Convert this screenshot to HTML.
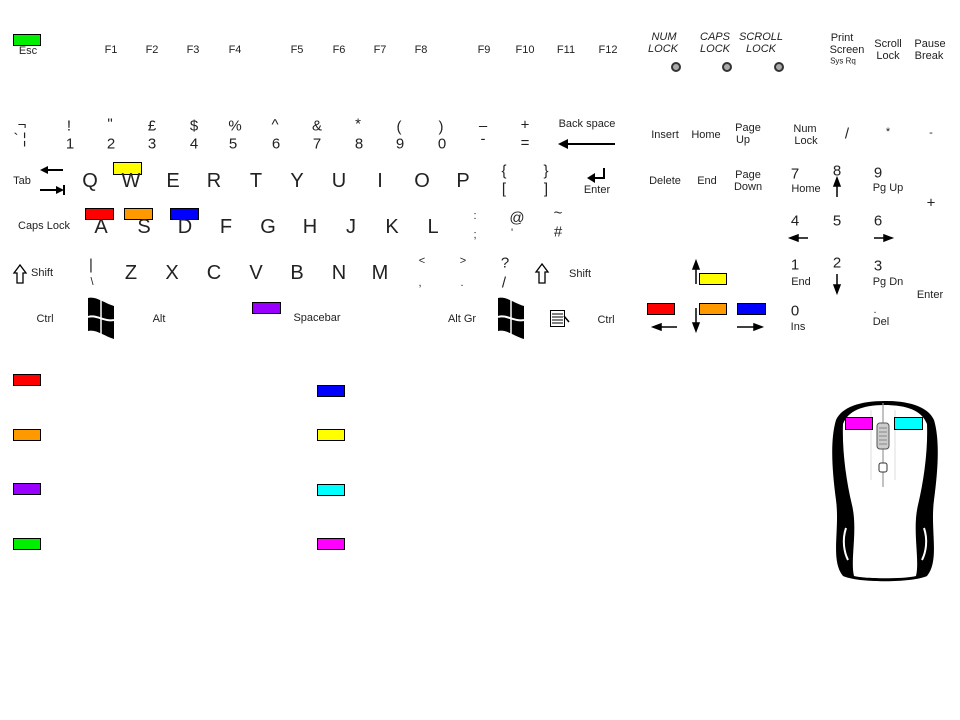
<!DOCTYPE html>
<html><head><meta charset="utf-8"><style>
html,body{margin:0;padding:0;background:#fff;width:960px;height:720px;overflow:hidden}
svg text{font-family:"Liberation Sans",sans-serif;fill:#222;text-anchor:middle;dominant-baseline:central}
.s{font-size:11px}.m{font-size:15px}.l{font-size:20px}.t{font-size:10px}
.i{font-style:italic;font-size:11px}
</style></head><body>
<svg width="960" height="720" viewBox="0 0 960 720" xmlns="http://www.w3.org/2000/svg">
<defs>
<g id="win">
<path d="M0,0 C8,-2 16,5 26,8 L26,41 C16,38 8,31 0,33 Z" fill="#000"/>
<path d="M0,19 C8,16 16,24 26,22" stroke="#fff" stroke-width="2" fill="none"/>
<path d="M13,2 L13,36" stroke="#fff" stroke-width="1.5"/>
</g>
</defs>
<g stroke="#000" stroke-width="1">
<rect x="13.5" y="34.5" width="27" height="11" fill="#00ee00"/>
<rect x="113.5" y="162.5" width="28" height="12" fill="#ffff00"/>
<rect x="85.5" y="208.5" width="28" height="11" fill="#ff0000"/>
<rect x="124.5" y="208.5" width="28" height="11" fill="#ff9900"/>
<rect x="170.5" y="208.5" width="28" height="11" fill="#0000ff"/>
<rect x="252.5" y="302.5" width="28" height="11" fill="#9900ff"/>
<rect x="699.5" y="273.5" width="27" height="11" fill="#ffff00"/>
<rect x="647.5" y="303.5" width="27" height="11" fill="#ff0000"/>
<rect x="699.5" y="303.5" width="27" height="11" fill="#ff9900"/>
<rect x="737.5" y="303.5" width="28" height="11" fill="#0000ff"/>
<rect x="13.5" y="374.5" width="27" height="11" fill="#ff0000"/>
<rect x="13.5" y="429.5" width="27" height="11" fill="#ff9900"/>
<rect x="13.5" y="483.5" width="27" height="11" fill="#9900ff"/>
<rect x="13.5" y="538.5" width="27" height="11" fill="#00ee00"/>
<rect x="317.5" y="385.5" width="27" height="11" fill="#0000ff"/>
<rect x="317.5" y="429.5" width="27" height="11" fill="#ffff00"/>
<rect x="317.5" y="484.5" width="27" height="11" fill="#00ffff"/>
<rect x="317.5" y="538.5" width="27" height="11" fill="#ff00ff"/>
</g>
<text class="s" x="28" y="51">Esc</text>
<text class="s" x="111" y="50">F1</text><text class="s" x="152" y="50">F2</text><text class="s" x="193" y="50">F3</text><text class="s" x="235" y="50">F4</text>
<text class="s" x="297" y="50">F5</text><text class="s" x="339" y="50">F6</text><text class="s" x="380" y="50">F7</text><text class="s" x="421" y="50">F8</text>
<text class="s" x="484" y="50">F9</text><text class="s" x="525" y="50">F10</text><text class="s" x="566" y="50">F11</text><text class="s" x="608" y="50">F12</text>
<text class="i" x="664" y="37">NUM</text><text class="i" x="663" y="49">LOCK</text>
<text class="i" x="715" y="37">CAPS</text><text class="i" x="715" y="49">LOCK</text>
<text class="i" x="761" y="37">SCROLL</text><text class="i" x="761" y="49">LOCK</text>
<g fill="#aaa" stroke="#333" stroke-width="2"><circle cx="676" cy="67" r="4"/><circle cx="727" cy="67" r="4"/><circle cx="779" cy="67" r="4"/></g>
<text class="s" x="842" y="38">Print</text><text class="s" x="847" y="50">Screen</text><text style="font-size:8px" x="843" y="61">Sys Rq</text>
<text class="s" x="888" y="44">Scroll</text><text class="s" x="888" y="56">Lock</text>
<text class="s" x="930" y="44">Pause</text><text class="s" x="929" y="56">Break</text>
<text class="m" x="22" y="125">¬</text><text class="m" x="20" y="139">` ¦</text>
<text class="m" x="69" y="126">!</text><text class="m" x="70" y="144">1</text>
<text class="m" x="110" y="124">"</text><text class="m" x="111" y="144">2</text>
<text class="m" x="152" y="126">£</text><text class="m" x="152" y="144">3</text>
<text class="m" x="194" y="126">$</text><text class="m" x="194" y="144">4</text>
<text class="m" x="235" y="126">%</text><text class="m" x="233" y="144">5</text>
<text class="m" x="275" y="125">^</text><text class="m" x="276" y="144">6</text>
<text class="m" x="317" y="126">&amp;</text><text class="m" x="317" y="144">7</text>
<text class="m" x="358" y="124">*</text><text class="m" x="359" y="144">8</text>
<text class="m" x="399" y="127">(</text><text class="m" x="400" y="144">9</text>
<text class="m" x="441" y="127">)</text><text class="m" x="442" y="144">0</text>
<text class="m" x="483" y="126">–</text><text class="m" x="483" y="139">-</text>
<text class="m" x="525" y="125">+</text><text class="m" x="525" y="143">=</text>
<text class="s" x="587" y="124">Back space</text>
<path d="M565,144 L615,144" stroke="#000" stroke-width="2"/><path d="M558,144 L568,139 L568,149Z" fill="#000"/>
<text class="s" x="22" y="181">Tab</text>
<path d="M46,170 L63,170" stroke="#000" stroke-width="2"/><path d="M40,170 L48,166 L48,174Z" fill="#000"/>
<path d="M40,190 L57,190" stroke="#000" stroke-width="2"/><path d="M64,190 L56,186 L56,194Z" fill="#000"/><path d="M64,185 L64,195" stroke="#000" stroke-width="2"/>
<text class="l" x="90" y="181">Q</text><text class="l" x="131" y="181">W</text><text class="l" x="173" y="181">E</text><text class="l" x="214" y="181">R</text><text class="l" x="256" y="181">T</text>
<text class="l" x="297" y="181">Y</text><text class="l" x="339" y="181">U</text><text class="l" x="380" y="181">I</text><text class="l" x="422" y="181">O</text><text class="l" x="463" y="181">P</text>
<text class="m" x="504" y="171">{</text><text class="m" x="504" y="189">[</text><text class="m" x="546" y="171">}</text><text class="m" x="546" y="189">]</text>
<path d="M604,168 L604,178 L593,178" stroke="#000" stroke-width="2" fill="none"/><path d="M587,178 L595,173 L595,183Z" fill="#000"/>
<text class="s" x="597" y="190">Enter</text>
<text class="s" x="44" y="226">Caps Lock</text>
<text class="l" x="101" y="227">A</text><text class="l" x="144" y="227">S</text><text class="l" x="185" y="227">D</text><text class="l" x="226" y="227">F</text><text class="l" x="268" y="227">G</text>
<text class="l" x="310" y="227">H</text><text class="l" x="351" y="227">J</text><text class="l" x="392" y="227">K</text><text class="l" x="433" y="227">L</text>
<text class="s" x="475" y="216">:</text><text class="s" x="475" y="235">;</text>
<text class="m" x="517" y="218">@</text><text class="s" x="512" y="233">'</text>
<text class="m" x="558" y="213">~</text><text class="m" x="558" y="232">#</text>
<path d="M20,265 L14,273 L17,273 L17,283 L23,283 L23,273 L26,273Z" fill="#fff" stroke="#000" stroke-width="1.3"/>
<text class="s" x="42" y="273">Shift</text>
<text class="m" x="91" y="265">|</text><text class="s" x="92" y="282">\</text>
<text class="l" x="131" y="273">Z</text><text class="l" x="172" y="273">X</text><text class="l" x="214" y="273">C</text><text class="l" x="256" y="273">V</text>
<text class="l" x="297" y="273">B</text><text class="l" x="339" y="273">N</text><text class="l" x="380" y="273">M</text>
<text class="s" x="422" y="261">&lt;</text><text class="s" x="420" y="283">,</text>
<text class="s" x="463" y="261">&gt;</text><text class="s" x="462" y="283">.</text>
<text class="m" x="505" y="263">?</text><text class="m" x="504" y="283">/</text>
<path d="M542,264 L536,272 L539,272 L539,283 L545,283 L545,272 L548,272Z" fill="#fff" stroke="#000" stroke-width="1.3"/>
<text class="s" x="580" y="274">Shift</text>
<text class="s" x="45" y="319">Ctrl</text>
<use href="#win" x="88" y="298"/>
<text class="s" x="159" y="319">Alt</text>
<text class="s" x="317" y="318">Spacebar</text>
<text class="s" x="462" y="319">Alt Gr</text>
<use href="#win" x="498" y="298"/>
<g stroke="#000" fill="#fff"><rect x="550.5" y="310.5" width="14" height="16"/><path d="M552,314h11M552,317h11M552,320h11M552,323h11"/></g>
<path d="M564,316 L569,322" stroke="#000" stroke-width="1.5"/>
<text class="s" x="606" y="320">Ctrl</text>
<text class="s" x="665" y="135">Insert</text><text class="s" x="706" y="135">Home</text><text class="s" x="748" y="128">Page</text><text class="s" x="743" y="140">Up</text>
<text class="s" x="665" y="181">Delete</text><text class="s" x="707" y="181">End</text><text class="s" x="748" y="175">Page</text><text class="s" x="748" y="187">Down</text>
<g stroke="#000" stroke-width="1.5" fill="#000">
<path d="M696,268 L696,284" fill="none"/><path d="M696,261 L693,269 L699,269Z"/>
<path d="M696,308 L696,324" fill="none"/><path d="M696,331 L693,323 L699,323Z"/>
<path d="M660,327 L677,327" fill="none"/><path d="M653,327 L661,324 L661,330Z"/>
<path d="M737,327 L755,327" fill="none"/><path d="M762,327 L754,324 L754,330Z"/>
</g>
<text class="s" x="805" y="129">Num</text><text class="s" x="806" y="141">Lock</text>
<text class="m" x="847" y="134">/</text><text class="s" x="888" y="132">*</text><text class="s" x="931" y="133">-</text>
<text class="m" x="795" y="174">7</text><text class="s" x="806" y="189">Home</text>
<text class="m" x="837" y="171">8</text><text class="m" x="878" y="173">9</text><text class="s" x="888" y="188">Pg Up</text>
<text class="m" x="931" y="203">+</text>
<text class="m" x="795" y="221">4</text><text class="m" x="837" y="221">5</text><text class="m" x="878" y="221">6</text>
<text class="m" x="795" y="265">1</text><text class="s" x="801" y="282">End</text>
<text class="m" x="837" y="263">2</text><text class="m" x="878" y="266">3</text><text class="s" x="888" y="282">Pg Dn</text>
<text class="s" x="930" y="295">Enter</text>
<text class="m" x="795" y="311">0</text><text class="s" x="798" y="327">Ins</text>
<text class="s" x="875" y="310">.</text><text class="s" x="881" y="322">Del</text>
<g stroke="#000" stroke-width="1.5" fill="#000">
<path d="M837,184 L837,197" fill="none"/><path d="M837,178 L834,186 L840,186Z"/>
<path d="M837,274 L837,287" fill="none"/><path d="M837,293 L834,285 L840,285Z"/>
<path d="M796,238 L808,238" fill="none"/><path d="M790,238 L798,235 L798,241Z"/>
<path d="M874,238 L886,238" fill="none"/><path d="M892,238 L884,235 L884,241Z"/>
</g>
<path d="M885,401 C860,401 842,407 836,420 C830,440 832,470 836,500 C840,530 830,560 843,576 C858,583 912,583 927,576 C940,560 930,530 934,500 C938,470 940,440 934,420 C928,407 910,401 885,401Z" fill="#000"/>
<path d="M885,405 C862,405 848,411 843,424 C842,450 846,480 852,505 C858,530 850,560 854,576 C865,579 905,579 916,576 C920,560 912,530 918,505 C924,480 928,450 927,424 C922,411 908,405 885,405Z" fill="#fff"/>
<path d="M846,528 C842,540 844,552 848,560" stroke="#fff" stroke-width="2" fill="none"/>
<path d="M924,528 C928,540 926,552 922,560" stroke="#fff" stroke-width="2" fill="none"/>
<path d="M883,403 L883,487" stroke="#999" stroke-width="1.2"/>
<path d="M871,410 L871,480 M895,410 L895,480" stroke="#ddd" stroke-width="1"/>
<rect x="877" y="423" width="12" height="26" rx="3" fill="#ccc" stroke="#555"/>
<path d="M879,428h8M879,432h8M879,436h8M879,440h8M879,444h8" stroke="#888"/>
<rect x="879" y="463" width="8" height="9" rx="2" fill="#fff" stroke="#333"/>
<rect x="845.5" y="417.5" width="27" height="12" fill="#ff00ff" stroke="#000"/>
<rect x="894.5" y="417.5" width="28" height="12" fill="#00ffff" stroke="#000"/>
</svg>
</body></html>
